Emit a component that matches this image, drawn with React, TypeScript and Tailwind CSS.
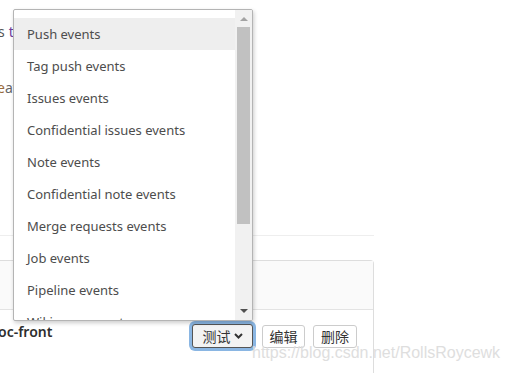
const events = [
  "Push events",
  "Tag push events",
  "Issues events",
  "Confidential issues events",
  "Note events",
  "Confidential note events",
  "Merge requests events",
  "Job events",
  "Pipeline events",
  "Wiki page events",
];

function EventMenu() {
  return (
    <div className="absolute left-[13px] top-[9px] flex h-[312px] w-[240px] overflow-hidden rounded-[2px] border border-[#b4b4b4] bg-white shadow-[1px_2px_4px_rgba(0,0,0,0.2)]">
      <ul className="flex-1 pt-[8px] font-['Noto_Sans',sans-serif] text-[13px] text-[#4d4d4d]">
        {events.map((e, i) => (
          <li
            key={e}
            className={`flex h-[32px] items-center pl-[13px] pt-[1px] ${i === 0 ? "bg-[#eeeeee]" : ""}`}
          >
            {e}
          </li>
        ))}
      </ul>
      <div className="flex w-[17px] flex-col bg-[#f1f1f1]">
        <div className="flex h-[17px] items-center justify-center">
          <svg width="8" height="5" viewBox="0 0 8 5">
            <path d="M0 5 L4 1 L8 5 Z" fill="#a3a3a3" />
          </svg>
        </div>
        <div className="mx-[2px] h-[197px] bg-[#c1c1c1]" />
        <div className="flex-1" />
        <div className="flex h-[17px] items-center justify-center">
          <svg width="8" height="5" viewBox="0 0 8 5">
            <path d="M0 0 L8 0 L4 4 Z" fill="#505050" />
          </svg>
        </div>
      </div>
    </div>
  );
}

export default function App() {
  return (
    <div className="relative h-[373px] w-[508px] overflow-hidden bg-white font-['Noto_Sans',sans-serif] text-[14px] text-[#333]">
      <div className="-ml-4 w-[390px]">
        <div className="flex h-[42px] items-end pl-[14px] leading-[20px] text-[#555]">
          <span>s</span>
          <span className="ml-[4px] text-[#6b3fa0]">to</span>
        </div>
        <div className="mt-[36px] flex pl-[13px] leading-[20px]">
          <span className="text-[#9a6a3a]">e</span>
          <span className="text-[#666]">ate</span>
        </div>
        <div className="mt-[137px] border-t border-[#eeeeee]" />
        <div className="mt-[24px] rounded-t-[4px] border-x border-t border-[#dddddd]">
          <div className="h-[49px] border-b border-[#e3e3e3] bg-[#fafafa]" />
          <div className="flex h-[80px] items-start justify-between pr-[16px] pt-[12px]">
            <span className="pl-[13px] font-semibold leading-[20px] text-[#2e2e2e]">oc-front</span>
            <div className="mt-[2px] flex items-center gap-[8px] font-['Noto_Sans_CJK_SC',sans-serif] text-[14px] text-[#333]">
              <button className="flex h-[24px] w-[61px] items-center justify-center gap-[3px] rounded-[3px] border border-[#555] bg-[#f3f3f3] ring-[3px] ring-[#8ab6e3]">
                测试
                <svg width="9" height="6" viewBox="0 0 9 6">
                  <path d="M1 1 L4.5 4.5 L8 1" fill="none" stroke="#333" strokeWidth="2" />
                </svg>
              </button>
              <button className="ml-[1px] h-[23px] w-[43px] rounded-[3px] border border-[#cccccc] bg-white">编辑</button>
              <button className="h-[23px] w-[44px] rounded-[3px] border border-[#cccccc] bg-white">删除</button>
            </div>
          </div>
        </div>
      </div>
      <EventMenu />
      <div className="pointer-events-none absolute left-[252px] top-[341px] font-['Liberation_Sans',sans-serif] text-[16px] text-[#dedede]">
        https://blog.csdn.net/RollsRoycewk
      </div>
    </div>
  );
}
